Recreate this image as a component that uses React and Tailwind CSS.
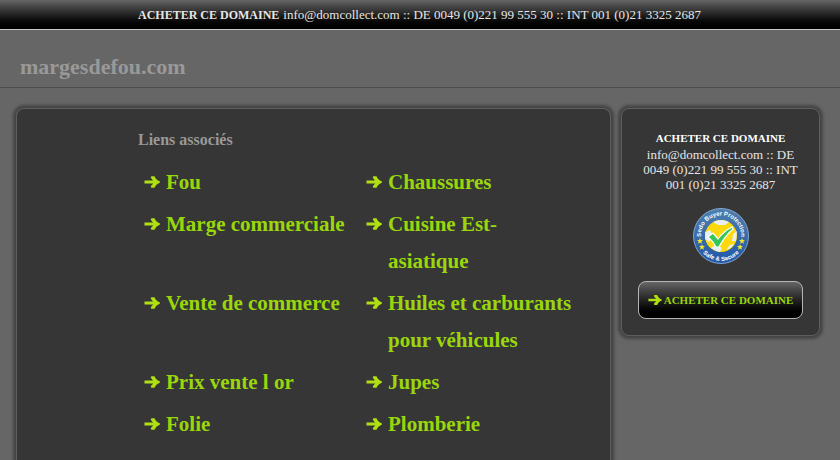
const links = [
  ['Fou', 'Chaussures'],
  ['Marge commerciale', 'Cuisine Est-asiatique'],
  ['Vente de commerce', 'Huiles et carburants pour véhicules'],
  ['Prix vente l or', 'Jupes'],
  ['Folie', 'Plomberie'],
];

const contact = 'info@domcollect.com :: DE 0049 (0)221 99 555 30 :: INT 001 (0)21 3325 2687';

const panel = 'border border-[#5e5e5e] bg-[#363636] shadow-[0_0_3px_3px_#454545]';

function Arrow({ className }) {
  return (
    <svg viewBox="0 0 16 12" className={className} fill="#b0e010" aria-hidden="true">
      <path d="M0.500 4.500H9.300C8.300 3.600 7.200 2.400 6.800 1.400Q6.600 0.200 8 0.200H10.500C11.500 2.600 13 4.300 15.800 5.300V6.700C13 7.700 11.500 9.400 10.500 11.800H8Q6.600 11.800 6.800 10.600C7.200 9.600 8.300 8.400 9.300 7.500H0.500Z" />
    </svg>
  );
}

function Seal() {
  return (
    <svg viewBox="0 0 56 56" className="size-14" role="img" aria-label="Sedo Buyer Protection, Safe & Secure">
      <defs>
        <linearGradient id="ring" x1="0" y1="0" x2="0" y2="1">
          <stop offset="0" stopColor="#4f7fae" />
          <stop offset="1" stopColor="#2158a8" />
        </linearGradient>
        <path id="top" d="M8.500 32A20 20 0 1 1 47.500 32" />
        <path id="bottom" d="M7 41A24.500 24.500 0 0 0 49 41" />
      </defs>
      <circle cx="28" cy="28" r="27.500" fill="url(#ring)" stroke="#7fa6cf" />
      <circle cx="28" cy="28" r="16" fill="#fbd90c" />
      <path d="M20 14Q28 10 36 14L32 17H25ZM12 24L17 22L20 28L16 34L12 31ZM44 23L40 26L39 33L43 33ZM18 40L23 36L29 40L27 44Q22 43 18 40ZM33 42L37 37L41 36Q38 41 33 42Z" fill="#e9eef5" />
      <path d="M15 29L20 25L25 31Q31 23 39 19L40 21Q31 29 26 39L23 39Q20 33 15 29Z" fill="#35c65a" stroke="#fff" strokeWidth="1.200" />
      <g fill="#fff" fontFamily="'Liberation Sans', sans-serif" fontWeight="bold" fontSize="6">
        <text textAnchor="middle"><textPath href="#top" startOffset="50%">Sedo Buyer Protection</textPath></text>
        <text textAnchor="middle"><textPath href="#bottom" startOffset="50%">Safe &amp; Secure</textPath></text>
      </g>
      <g fill="#f4e72a">
        {[[7, 33], [9, 39], [49, 33], [47, 39]].map(([x, y]) => (
          <path key={`${x}-${y}`} transform={`translate(${x} ${y})`} d="M0 -3L0.800 -1L3 -1L1.300 0.500L2 2.700L0 1.400L-2 2.700L-1.300 0.500L-3 -1L-0.800 -1Z" />
        ))}
      </g>
    </svg>
  );
}

function RelatedLink({ children }) {
  return (
    <li className="flex pr-2 pl-1.5 text-[21px] leading-[37px] font-bold text-[#9ad60c]">
      <Arrow className="mt-3 mr-1.5 h-3 w-4 shrink-0" />
      <a href="#">{children}</a>
    </li>
  );
}

export default function App() {
  return (
    <div className="flex min-h-screen flex-col bg-[#666] font-['Liberation_Serif',serif]">
      <div className="flex h-[30px] items-center border-b border-[#c8c8c8] bg-linear-to-b from-[#666] to-black pl-[138px] text-[13px] text-[#e6e6e6]">
        <p className="whitespace-nowrap">
          <a href="#" className="mr-1 text-[12px] font-bold">ACHETER CE DOMAINE</a>
          {contact}
        </p>
      </div>
      <header className="flex h-[58px] items-center border-b border-[#4c4c4c] pt-4 pl-5">
        <h1 className="text-[22px] font-bold text-[#999]">margesdefou.com</h1>
      </header>
      <div className="flex flex-1 items-start gap-2.5 pt-5 pr-5 pl-4">
        <main className={`${panel} flex-1 self-stretch rounded-t-lg border-b-0 pt-[19px] pr-7 pl-[121px]`}>
          <h2 className="text-[16px] leading-6 font-bold text-[#999]">Liens associés</h2>
          <ul className="mt-3 grid grid-cols-2 gap-y-[5px]">
            {links.flat().map((name) => (
              <RelatedLink key={name}>{name}</RelatedLink>
            ))}
          </ul>
        </main>
        <aside className={`${panel} flex w-[199px] flex-col items-center rounded-lg px-4 pt-5 pb-4 text-center text-[#e6e6e6]`}>
          <a href="#" className="text-[11px] leading-[18px] font-bold text-white">ACHETER CE DOMAINE</a>
          <p className="text-[13px] leading-[15px]">{contact}</p>
          <div className="mt-4">
            <Seal />
          </div>
          <button
            type="button"
            className="mt-[17px] flex h-[38px] w-full items-center justify-center gap-0.5 rounded-lg border border-[#b5b5b5] bg-linear-to-b from-[#666] to-black text-[11px] font-bold whitespace-nowrap text-[#9ad60c]"
          >
            <Arrow className="h-3 w-3.5 shrink-0" />
            ACHETER CE DOMAINE
          </button>
        </aside>
      </div>
    </div>
  );
}
